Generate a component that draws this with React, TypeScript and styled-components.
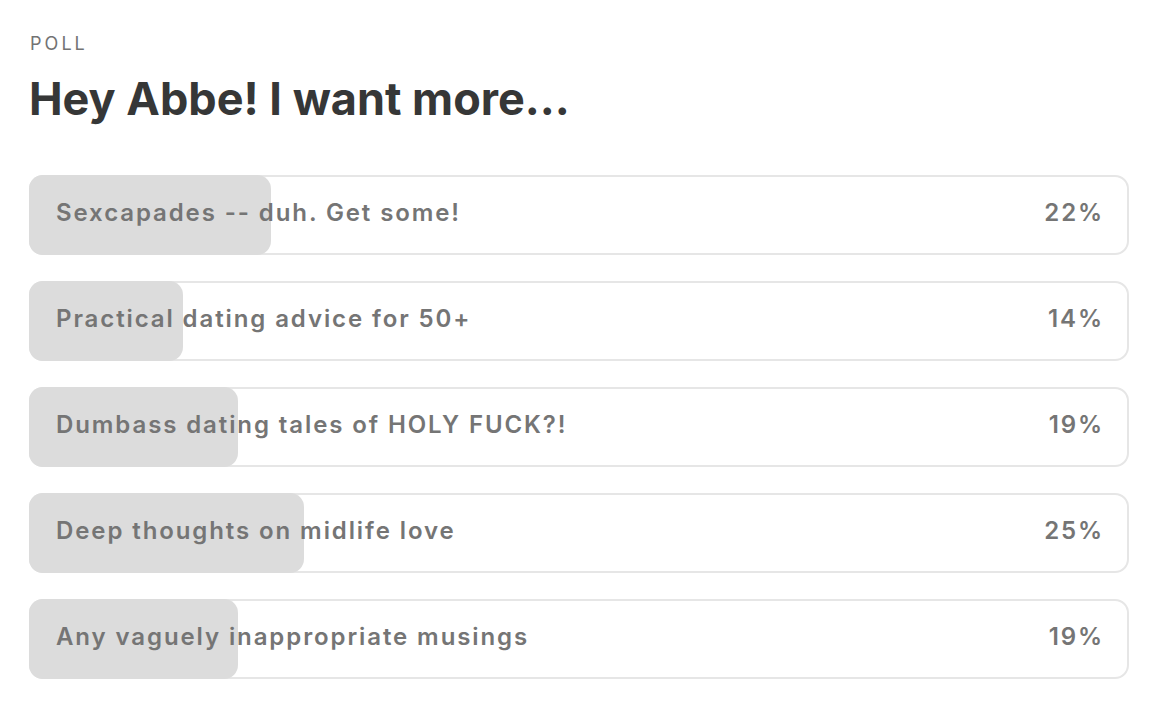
import React, { FC } from "react";
import styled, { createGlobalStyle } from "styled-components";

const GlobalStyle = createGlobalStyle`
	html, body {
		margin: 0;
		padding: 0;
		background: #ffffff;
	}
	body {
		font-family: Inter, "Noto Sans", "Liberation Sans", sans-serif;
		-webkit-font-smoothing: antialiased;
	}
`;

const PollWrapper = styled.div`
	width: 1100px;
	padding: 33px 0 0 29px;
	display: flex;
	flex-direction: column;
`;

const PollLabel = styled.div`
	font-size: 18px;
	line-height: 22px;
	letter-spacing: 0.17em;
	color: #737373;
	padding-left: 1px;
`;

const PollTitle = styled.h1`
	margin: 16px 0 0 0;
	font-size: 45px;
	line-height: 56px;
	font-weight: 700;
	color: #363737;
`;

const OptionList = styled.div`
	margin-top: 48px;
	display: flex;
	flex-direction: column;
	gap: 26px;
`;

const OptionBox = styled.div`
	position: relative;
	height: 70px;
	border: 2px solid #e6e6e6;
	border-radius: 14px;
	display: flex;
	align-items: center;
	justify-content: space-between;
	padding: 0 23px 6px 25px;
	font-size: 24px;
	font-weight: 600;
	letter-spacing: 1.9px;
	color: #757575;
`;

const OptionFill = styled.div`
	position: absolute;
	top: -2px;
	bottom: -2px;
	left: -2px;
	background: #dcdcdc;
	border-radius: 14px;
`;

const OptionText = styled.span`
	position: relative;
`;

interface IPollOption {
	label: string;
	percent: number;
}

const OPTIONS: IPollOption[] = [
	{ label: "Sexcapades -- duh. Get some!", percent: 22 },
	{ label: "Practical dating advice for 50+", percent: 14 },
	{ label: "Dumbass dating tales of HOLY FUCK?!", percent: 19 },
	{ label: "Deep thoughts on midlife love", percent: 25 },
	{ label: "Any vaguely inappropriate musings", percent: 19 },
];

const PollOption: FC<IPollOption> = ({ label, percent }) => {
	return (
		<OptionBox>
			<OptionFill style={{ width: `${(1100 * percent) / 100}px` }} />
			<OptionText>{label}</OptionText>
			<OptionText>{`${percent}%`}</OptionText>
		</OptionBox>
	);
};

const App: FC = () => {
	return (
		<>
			<GlobalStyle />
			<PollWrapper>
				<PollLabel>POLL</PollLabel>
				<PollTitle>Hey Abbe! I want more...</PollTitle>
				<OptionList>
					{OPTIONS.map((option) => (
						<PollOption key={option.label} {...option} />
					))}
				</OptionList>
			</PollWrapper>
		</>
	);
};

export default App;
